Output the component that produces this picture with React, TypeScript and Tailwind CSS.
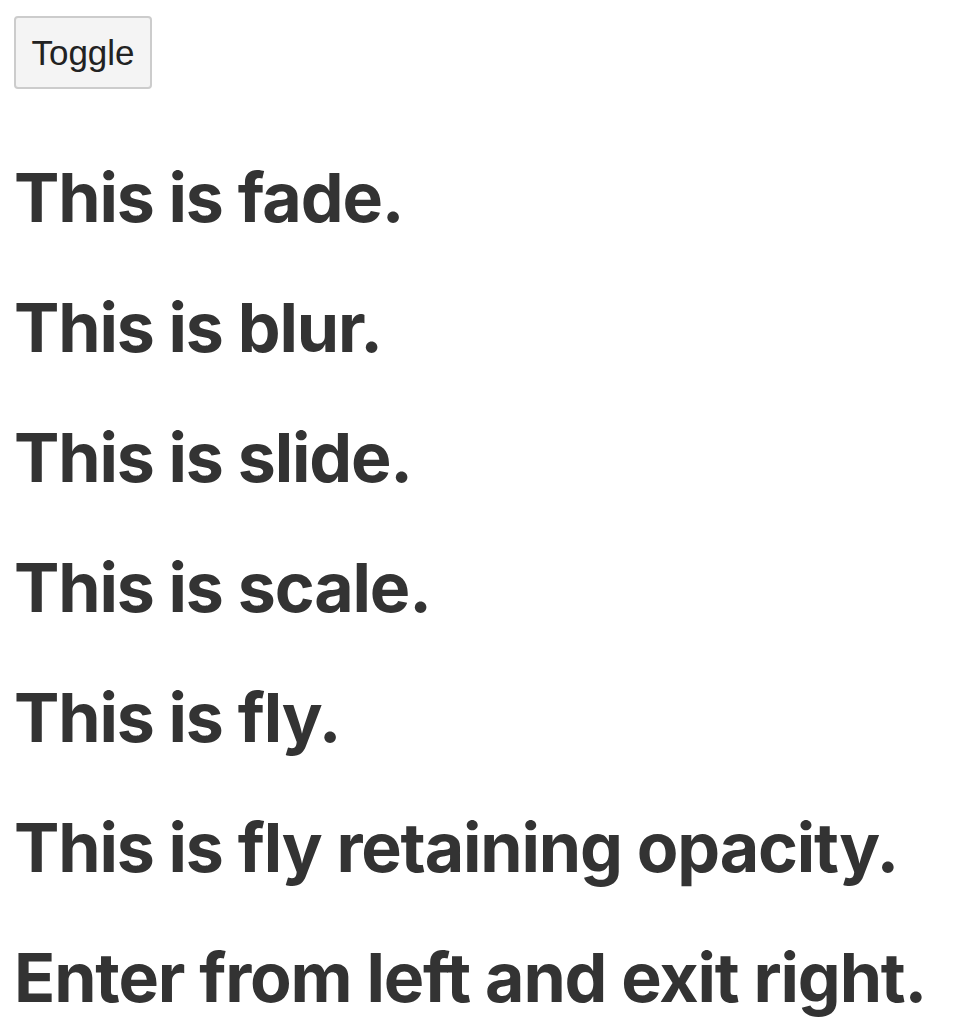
export default function App() {
  const lines = [
    "This is fade.",
    "This is blur.",
    "This is slide.",
    "This is scale.",
    "This is fly.",
    "This is fly retaining opacity.",
    "Enter from left and exit right.",
  ];
  return (
    <div className="bg-white min-h-screen pl-[14px] pt-[16px]">
      <button className="h-[73px] w-[138px] rounded-[4px] border-2 border-[#cccccc] bg-[#f4f4f4] text-[35px] text-[#222222] font-['Liberation_Sans',Arial,sans-serif] leading-none">
        Toggle
      </button>
      <div className="mt-[43px]">
        {lines.map((l) => (
          <h1
            key={l}
            className="m-0 whitespace-nowrap text-[68px] leading-[130px] font-bold tracking-[-1.15px] text-[#333333] font-['Inter',sans-serif]"
          >
            {l}
          </h1>
        ))}
      </div>
    </div>
  );
}
